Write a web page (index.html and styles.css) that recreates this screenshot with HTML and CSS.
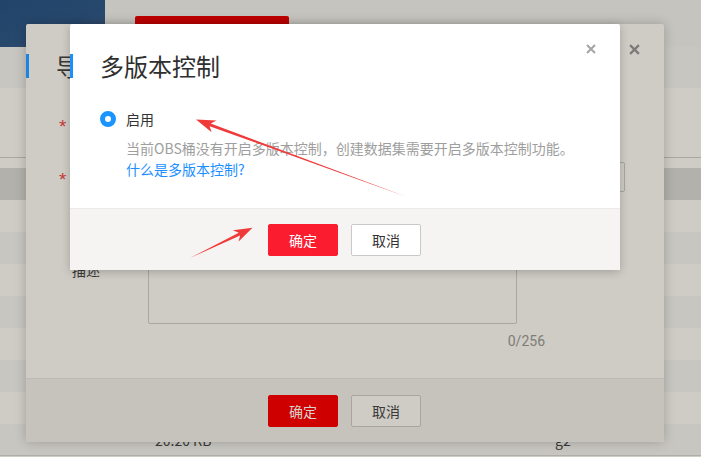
FILE: index.html
```html
<!DOCTYPE html>
<html lang="zh-CN">
<head>
<meta charset="utf-8">
<title>多版本控制</title>
<link rel="stylesheet" href="styles.css">
</head>
<body>
<div class="page">
  <div class="topbar">
    <div class="logo"></div>
    <div class="topbar-rest"><span class="top-btn"></span></div>
  </div>
  <div class="subbar"></div>
  <div class="filters"></div>
  <div class="gap"></div>
  <div class="thead"></div>
  <div class="trow"></div>
  <div class="trow alt"></div>
  <div class="trow"></div>
  <div class="trow alt"></div>
  <div class="trow"></div>
  <div class="trow alt"></div>
  <div class="trow"></div>
  <div class="trow alt last"><span class="cell-size">20.20 KB</span><span class="cell-owner">g2</span></div>

  <section class="dialog back">
    <header class="dlg-head">
      <h2 class="dlg-title">导</h2>
      <svg class="close close-back" viewBox="0 0 10 10" width="11" height="11"><path d="M1 1L9 9M9 1L1 9" stroke="#7b7a78" stroke-width="2"/></svg>
    </header>
    <div class="back-body">
      <div class="frow r1"><span class="flabel"><i class="req">*</i></span><span class="finput narrow"></span></div>
      <div class="frow r2"><span class="flabel"><i class="req">*</i></span><span class="finput wide"></span></div>
      <div class="frow r3"><span class="flabel plain">描述</span><span class="ftext"></span></div>
      <div class="counter-row"><span class="counter">0/256</span></div>
    </div>
    <footer class="dlg-foot back-foot">
      <button class="btn primary-back">确定</button>
      <button class="btn cancel-back">取消</button>
    </footer>
  </section>

  <section class="dialog front">
    <header class="dlg-head">
      <h2 class="dlg-title">多版本控制</h2>
      <svg class="close close-front" viewBox="0 0 10 10" width="10" height="10"><path d="M1 1L9 9M9 1L1 9" stroke="#a5a5a5" stroke-width="2"/></svg>
    </header>
    <div class="front-body">
      <label class="radio-row"><span class="radio"></span><span class="radio-label">启用</span></label>
      <div class="desc">
        <p class="desc-text">当前OBS桶没有开启多版本控制，创建数据集需要开启多版本控制功能。</p>
        <a class="desc-link" href="#">什么是多版本控制?</a>
      </div>
    </div>
    <footer class="dlg-foot front-foot">
      <button class="btn primary">确定</button>
      <button class="btn cancel">取消</button>
    </footer>
  </section>

  <svg class="arrows" width="701" height="457" viewBox="0 0 701 457">
    <polygon points="407,197 210.7,123.4 216.5,120.4 196,119.5 211.6,132.2 209.6,126.2" fill="#f03a3a"/>
    <polygon points="190,258 240.1,235.5 238.6,241.6 252.5,227.8 232.9,230.2 238.8,232.8" fill="#f03a3a"/>
  </svg>
</div>
</body>
</html>
```

FILE: styles.css
```css
* { box-sizing: border-box; }
html, body { margin: 0; padding: 0; }
body {
  width: 701px;
  height: 457px;
  overflow: hidden;
  font-family: "Noto Sans CJK SC", "Noto Sans", sans-serif;
  font-size: 14px;
  color: #333;
  background: #cfccc6;
}
.page {
  position: relative;
  width: 701px;
  height: 457px;
  overflow: hidden;
}
.topbar {
  display: flex;
  height: 47px;
}
.logo {
  width: 105px;
  background: linear-gradient(160deg, #22446a 0%, #27486d 55%, #3a5472 100%);
}
.topbar-rest {
  flex: 1;
  background: #c6c4bf;
  padding: 16px 0 0 30px;
}
.top-btn {
  display: block;
  width: 154px;
  height: 32px;
  background: #c00000;
  border-radius: 2px;
}
.subbar {
  height: 41px;
  background: #c8c6c1;
}
.filters {
  height: 70px;
  background: #cfccc6;
  border-bottom: 1px solid #a9a7a3;
}
.gap { height: 10px; }
.thead { height: 32px; background: #b3b1ac; }
.trow { height: 32px; background: #cfccc6; display: flex; align-items: center; }
.trow.alt { background: #c8c6c1; }
.trow.last { border-bottom: 1px solid #b0aea9; }
.cell-size { margin-left: 155px; width: 400px; color: #3b3a38; }
.cell-owner { color: #3b3a38; }

/* dialogs */
.dialog {
  position: absolute;
  top: 24px;
  display: flex;
  flex-direction: column;
  border-radius: 2px;
}
.dialog.back {
  left: 26px;
  width: 638px;
  height: 418px;
  background: #cfccc6;
  box-shadow: 0 0 12px rgba(0,0,0,0.22);
}
.dialog.front {
  left: 70px;
  width: 550px;
  height: 246px;
  background: #fff;
  box-shadow: 0 2px 10px rgba(0,0,0,0.22);
}
.dlg-head {
  display: flex;
  justify-content: space-between;
  align-items: flex-start;
  padding-right: 24px;
}
.dlg-title {
  margin: 30px 0 0 0;
  padding-left: 27px;
  border-left: 3px solid #1a8fff;
  font-size: 24px;
  line-height: 24px;
  height: 24px;
  font-weight: 400;
  color: #2f2f2f;
  white-space: nowrap;
}
.back .dlg-title { color: #3a3936; border-left-color: #1a85e0; }
.close { margin-top: 20px; display: block; }

/* back dialog body */
.back-body {
  flex: 1;
  padding: 31px 0 0 33px;
}
.frow { display: flex; align-items: center; height: 30px; }
.r2 { margin-top: 23px; }
.r3 { margin-top: 63px; height: 69px; align-items: flex-start; }
.flabel {
  width: 89px;
  font-size: 14px;
  line-height: 30px;
  color: #3a3936;
  white-space: nowrap;
}
.flabel.plain { padding-left: 13px; }
.req {
  font-style: normal;
  font-family: "Liberation Sans", Arial, sans-serif;
  font-size: 19px;
  color: #c43a3a;
  display: inline-block;
  width: 10px;
  vertical-align: -5px;
}
.finput {
  height: 30px;
  border: 1px solid #a9a7a3;
  border-radius: 2px;
}
.finput.narrow { width: 369px; }
.finput.wide { width: 477px; }
.ftext {
  width: 369px;
  height: 69px;
  border: 1px solid #a9a7a3;
  border-radius: 2px;
}
.counter-row {
  margin: 6px 0 0 89px;
  width: 397px;
  text-align: right;
  line-height: 20px;
}
.counter { font-family: Roboto, "Noto Sans", sans-serif; font-size: 14px; color: #7e7c78; }

.dlg-foot {
  height: 64px;
  display: flex;
  justify-content: center;
  gap: 13px;
  padding-top: 16px;
  padding-right: 1px;
}
.back-foot {
  background: #c6c3bd;
  border-top: 1px solid #bdbab5;
}
.front-foot {
  height: 62px;
  padding-top: 15px;
  background: #f5f4f2;
  border-top: 1px solid #ebeae8;
}
.btn {
  width: 70px;
  height: 32px;
  border-radius: 2px;
  font-family: "Noto Sans CJK SC", sans-serif;
  font-size: 14px;
  padding: 0;
  cursor: pointer;
}
.primary { background: #fb1c2f; border: 1px solid #fb1c2f; color: #fff; }
.cancel { background: #fff; border: 1px solid #c9c9c9; color: #333; }
.primary-back { background: #cf0000; border: 1px solid #cf0000; color: #d8d3cd; }
.cancel-back { background: #cfccc6; border: 1px solid #a8a6a2; color: #3a3936; }

/* front body */
.front-body {
  flex: 1;
  padding: 33px 30px 0 30px;
}
.radio-row { display: flex; align-items: center; gap: 10px; height: 16px; }
.radio {
  width: 16px;
  height: 16px;
  border-radius: 50%;
  border: 5px solid #1a94ff;
  background: #fff;
}
.radio-label { font-size: 14px; line-height: 16px; color: #333; }
.desc { margin: 11px 0 0 26px; line-height: 21px; }
.desc-text { margin: 0; color: #9e9e9e; font-size: 14px; white-space: nowrap; }
.desc-link { color: #1b8fff; text-decoration: none; font-size: 14px; }

.arrows { position: absolute; left: 0; top: 0; pointer-events: none; }
```
